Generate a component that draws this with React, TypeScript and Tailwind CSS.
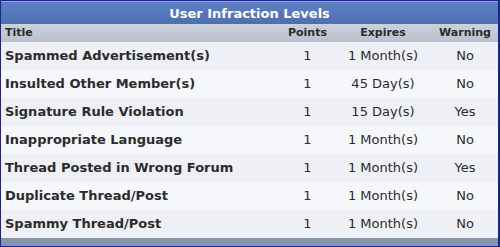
const rows = [
  { title: "Spammed Advertisement(s)", points: 1, expires: "1 Month(s)", warning: "No" },
  { title: "Insulted Other Member(s)", points: 1, expires: "45 Day(s)", warning: "No" },
  { title: "Signature Rule Violation", points: 1, expires: "15 Day(s)", warning: "Yes" },
  { title: "Inappropriate Language", points: 1, expires: "1 Month(s)", warning: "No" },
  { title: "Thread Posted in Wrong Forum", points: 1, expires: "1 Month(s)", warning: "Yes" },
  { title: "Duplicate Thread/Post", points: 1, expires: "1 Month(s)", warning: "No" },
  { title: "Spammy Thread/Post", points: 1, expires: "1 Month(s)", warning: "No" },
]

const cols = "grid grid-cols-[280px_53px_98px_66px]"

export default function App() {
  return (
    <div className="w-[500px] h-[247px] bg-white font-['DejaVu_Sans',Verdana,sans-serif] text-[#2b2b2b]">
      <div className="border-t border-l border-b border-r-2 border-[#1c2488]">
        {/* title bar */}
        <div className="border-t border-[#8fa9dc] h-[23px] bg-gradient-to-b from-[#5b80c3] to-[#4d70b3] flex items-center justify-center">
          <span className="text-white font-bold text-[13px] leading-none">User Infraction Levels</span>
        </div>

        {/* column headings */}
        <div className={`${cols} h-[18px] items-center bg-gradient-to-b from-[#ccd1dc] to-[#b9c0cd] text-[11px] font-bold`}>
          <div className="pl-1">Title</div>
          <div className="text-center">Points</div>
          <div className="text-center">Expires</div>
          <div className="text-center">Warning</div>
        </div>

        {rows.map((r, i) => (
          <div
            key={r.title}
            className={`${cols} h-[28px] items-center text-[13px] ${i % 2 === 0 ? "bg-[#eef0f5]" : "bg-[#f5f7fb]"}`}
          >
            <div className="pl-1 font-bold">{r.title}</div>
            <div className="text-center">{r.points}</div>
            <div className="text-center">{r.expires}</div>
            <div className="text-center">{r.warning}</div>
          </div>
        ))}

        <div className="h-[8px] bg-[#8595b4]" />
      </div>
    </div>
  )
}
